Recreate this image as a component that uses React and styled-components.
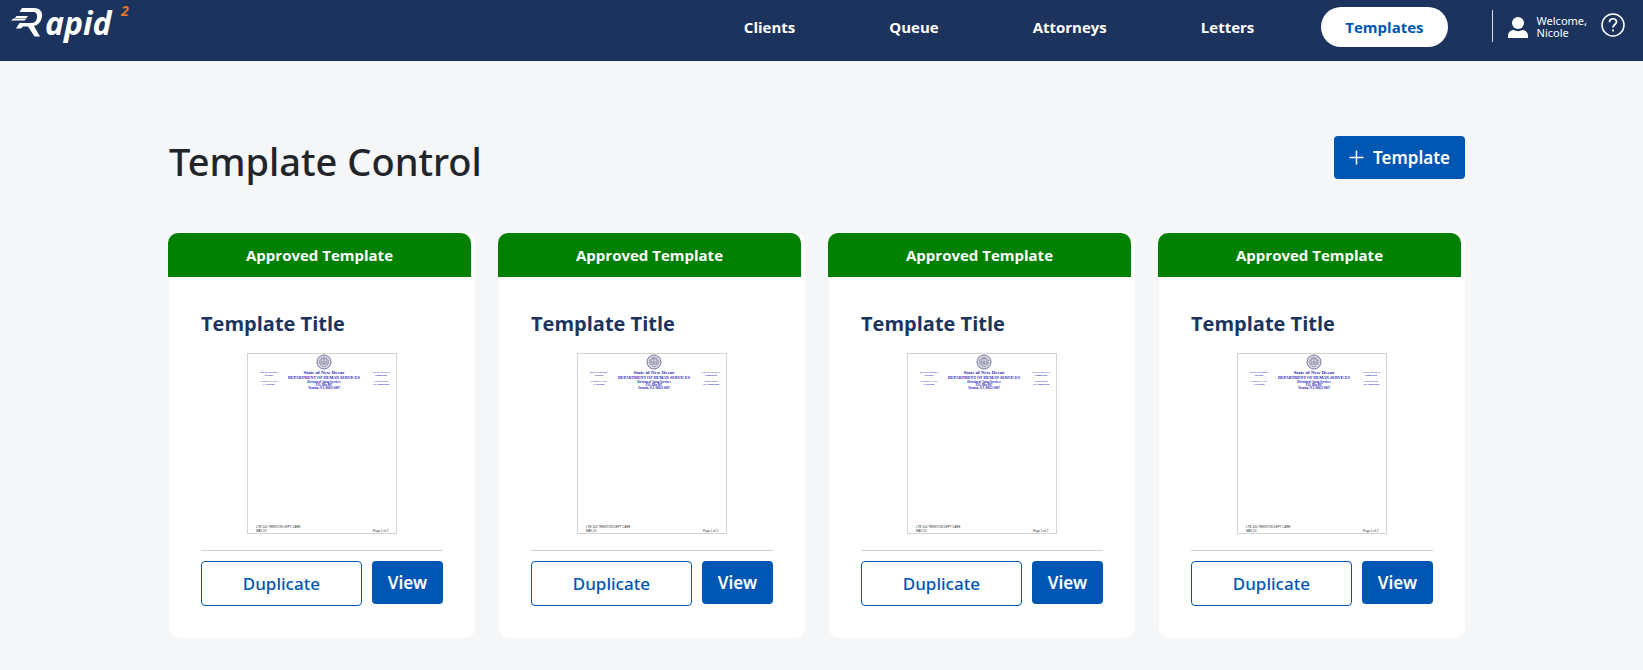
import React from "react";
import styled, { createGlobalStyle } from "styled-components";

const navy = "#1c345d";
const blue = "#0056b3";
const sans = `"Segoe UI", "Noto Sans", "Open Sans", sans-serif`;

const GlobalStyle = createGlobalStyle`
  *, *::before, *::after { box-sizing: border-box; }
  body { margin: 0; background: #f4f6f8; color: #212529; font-family: ${sans}; }
  h1, h2, p { margin: 0; }
  button { font-family: inherit; cursor: pointer; }
`;

const Header = styled.header`
  display: flex;
  align-items: flex-start;
  justify-content: space-between;
  height: 61px;
  padding: 0 18px 0 10px;
  background: ${navy};
  color: #fff;
`;

const LogoLink = styled.a`
  display: block;
  svg { display: block; }
`;

const HeaderRight = styled.div`
  display: flex;
  align-items: flex-start;
  padding-top: 7px;
`;

const Nav = styled.nav`
  display: flex;
  align-items: center;
  gap: 40px;
  margin-right: 44px;
`;

const NavLink = styled.a`
  padding: 0 ${(p) => (p.$active ? 24 : 27)}px;
  border-radius: 20px;
  background: ${(p) => (p.$active ? "#fff" : "transparent")};
  color: ${(p) => (p.$active ? blue : "#fff")};
  font: 700 15px/40px "Open Sans", sans-serif;
  text-decoration: none;
`;

const Account = styled.div`
  display: flex;
  align-items: center;
  gap: 9px;
  height: 32px;
  margin-top: 3px;
  padding: 2px 0 0 15px;
  border-left: 1px solid #d9dde4;
  svg { display: block; }
`;

const Greeting = styled.p`
  display: flex;
  flex-direction: column;
  font-size: 11px;
  line-height: 12px;
`;

const HelpButton = styled.button`
  display: flex;
  margin: 6px 0 0 14px;
  padding: 0;
  border: 0;
  background: none;
`;

const Main = styled.main`
  padding: 75px 33px 32px 24px;
`;

const Content = styled.div`
  max-width: 1296px;
  margin: 0 auto;
`;

const TitleRow = styled.div`
  display: flex;
  align-items: flex-start;
  justify-content: space-between;
  margin-bottom: 46px;
`;

const PageTitle = styled.h1`
  font: 500 38px/50px ${sans};
`;

const Button = styled.button`
  display: inline-flex;
  align-items: center;
  justify-content: center;
  gap: 9px;
  flex: ${(p) => (p.$wide ? 1 : "none")};
  height: ${(p) => (p.$outline ? 45 : 43)}px;
  padding: 0 ${(p) => (p.$roomy ? 16 : 15)}px;
  border: ${(p) => (p.$outline ? `1px solid ${blue}` : "0")};
  border-radius: 4px;
  background: ${(p) => (p.$outline ? "#fff" : blue)};
  color: ${(p) => (p.$outline ? blue : "#fff")};
  font-size: 17px;
  font-weight: ${(p) => (p.$outline ? 500 : 600)};
  line-height: 24px;
`;

const CardGrid = styled.div`
  display: grid;
  grid-template-columns: repeat(auto-fill, minmax(290px, 1fr));
  gap: 24px;
`;

const Card = styled.article`
  padding-top: 1px;
  border-radius: 10px;
  background: #fff;
`;

const Status = styled.p`
  margin: 0 4px 0 -1px;
  border-radius: 10px 10px 0 0;
  background: #008000;
  color: #fff;
  text-align: center;
  font: 700 15px/44px "Open Sans", sans-serif;
`;

const CardBody = styled.div`
  padding: 32px;
`;

const CardTitle = styled.h2`
  margin-bottom: 14px;
  color: ${navy};
  font: 700 20px/30px "Open Sans", sans-serif;
`;

const Sheet = styled.div`
  width: 150px;
  height: 181px;
  margin: 0 auto 16px;
  border: 1px solid #d3d3d3;
  svg { display: block; }
`;

const Actions = styled.div`
  display: flex;
  align-items: flex-start;
  gap: 10px;
  padding-top: 10px;
  border-top: 1px solid #d3d3d3;
`;

function Logo() {
  return (
    <svg width="136" height="54" viewBox="0 -4 136 54" role="img" aria-label="Rapid 2">
      <g fill="#fff">
        <path d="M12 4H24C30 4 33 8 32 13C31 18 28 21 24 22L30 32.500H24.500L18 22.500H13L11 24.500H6L9.500 19H22C25 19 27 16 27 13C27.500 10 26 8 23 8H9.500z" />
        <path d="M6.500 12H18L16.500 14H5z" />
        <path d="M3.500 14.500H16.500L14.500 16.500H1z" />
      </g>
      <text x="35" y="31" fill="#fff" fontFamily="Open Sans, sans-serif" fontWeight="700" fontStyle="italic" fontSize="32">apid</text>
      <text x="111" y="12" fill="#e87722" fontFamily="Open Sans, sans-serif" fontWeight="700" fontStyle="italic" fontSize="14">2</text>
    </svg>
  );
}

function UserIcon() {
  return (
    <svg width="20" height="21" viewBox="0 0 20 21" fill="#fff" aria-hidden="true">
      <circle cx="10" cy="6" r="6" />
      <path d="M0 21v-2c0-4 3-6 6-6 2 1.500 6 1.500 8 0 3 0 6 2 6 6v2z" />
    </svg>
  );
}

function HelpIcon() {
  return (
    <svg width="24" height="24" viewBox="0 0 24 24" fill="none" stroke="#fff" strokeWidth="1.500" aria-hidden="true">
      <circle cx="12" cy="12" r="11" />
      <path d="M8.500 9.200c0-4.600 7-4.400 7-.4 0 2.800-3.500 2.700-3.500 5.700M12 16.500v2" strokeWidth="1.700" />
    </svg>
  );
}

function PlusIcon() {
  return (
    <svg width="15" height="15" viewBox="0 0 15 15" stroke="#fff" strokeWidth="1.500" aria-hidden="true">
      <path d="M7.500 0.500v14M0.500 7.500h14" />
    </svg>
  );
}

function Letterhead() {
  return (
    <svg width="148" height="179" viewBox="0 0 148 179" role="img" aria-label="Template preview" fontFamily="Liberation Serif, serif">
      <circle cx="76" cy="8" r="7" fill="#d9d9e6" stroke="#77779a" />
      <circle cx="76" cy="8" r="4.500" fill="none" stroke="#77779a" strokeDasharray="1.500 1" />
      <path d="M73 10V6l3-2 3 2v4zM73 8h6M76 4v7" fill="none" stroke="#88889f" strokeWidth=".8" />
      <g fill="#2222bb" textAnchor="middle" fontWeight="700">
        <text x="76" y="20" fontSize="5">State of New Decor</text>
        <text x="76" y="25" fontSize="4">DEPARTMENT OF HUMAN SERVICES</text>
        <g fontSize="3">
          <text x="76" y="29">Division of Aging Services</text>
          <text x="76" y="32">P.O. Box 807</text>
          <text x="76" y="35">Trenton, N.J. 08625-0807</text>
        </g>
        <g fontSize="2">
          <text x="21" y="19">PHILIP D. MURPHY</text>
          <text x="21" y="22">Governor</text>
          <text x="21" y="28">TAHESHA L. WAY</text>
          <text x="21" y="31">Lt. Governor</text>
          <text x="133" y="19">SARAH ADELMAN</text>
          <text x="133" y="22">Commissioner</text>
          <text x="133" y="28">LOUISE RUSH</text>
          <text x="133" y="31">Asst. Commissioner</text>
        </g>
      </g>
      <g fill="#333" fontFamily="Liberation Sans, sans-serif" fontSize="3">
        <text x="8" y="174">LTR-100 TRENTON DEPT CARE</text>
        <text x="8" y="178">MAY-23</text>
        <text x="125" y="178">Page 1 of 2</text>
      </g>
    </svg>
  );
}

function TemplateCard() {
  return (
    <Card>
      <Status>Approved Template</Status>
      <CardBody>
        <CardTitle>Template Title</CardTitle>
        <Sheet><Letterhead /></Sheet>
        <Actions>
          <Button type="button" $outline $wide>Duplicate</Button>
          <Button type="button" $roomy>View</Button>
        </Actions>
      </CardBody>
    </Card>
  );
}

const links = ["Clients", "Queue", "Attorneys", "Letters", "Templates"];

export default function App() {
  return (
    <>
      <GlobalStyle />
      <Header>
        <LogoLink href="#"><Logo /></LogoLink>
        <HeaderRight>
          <Nav>
            {links.map((name) => (
              <NavLink key={name} href="#" $active={name === "Templates"}>{name}</NavLink>
            ))}
          </Nav>
          <Account>
            <UserIcon />
            <Greeting><span>Welcome,</span><span>Nicole</span></Greeting>
          </Account>
          <HelpButton type="button" aria-label="Help"><HelpIcon /></HelpButton>
        </HeaderRight>
      </Header>
      <Main>
        <Content>
          <TitleRow>
            <PageTitle>Template Control</PageTitle>
            <Button type="button"><PlusIcon />Template</Button>
          </TitleRow>
          <CardGrid>
            {[1, 2, 3, 4].map((id) => <TemplateCard key={id} />)}
          </CardGrid>
        </Content>
      </Main>
    </>
  );
}
